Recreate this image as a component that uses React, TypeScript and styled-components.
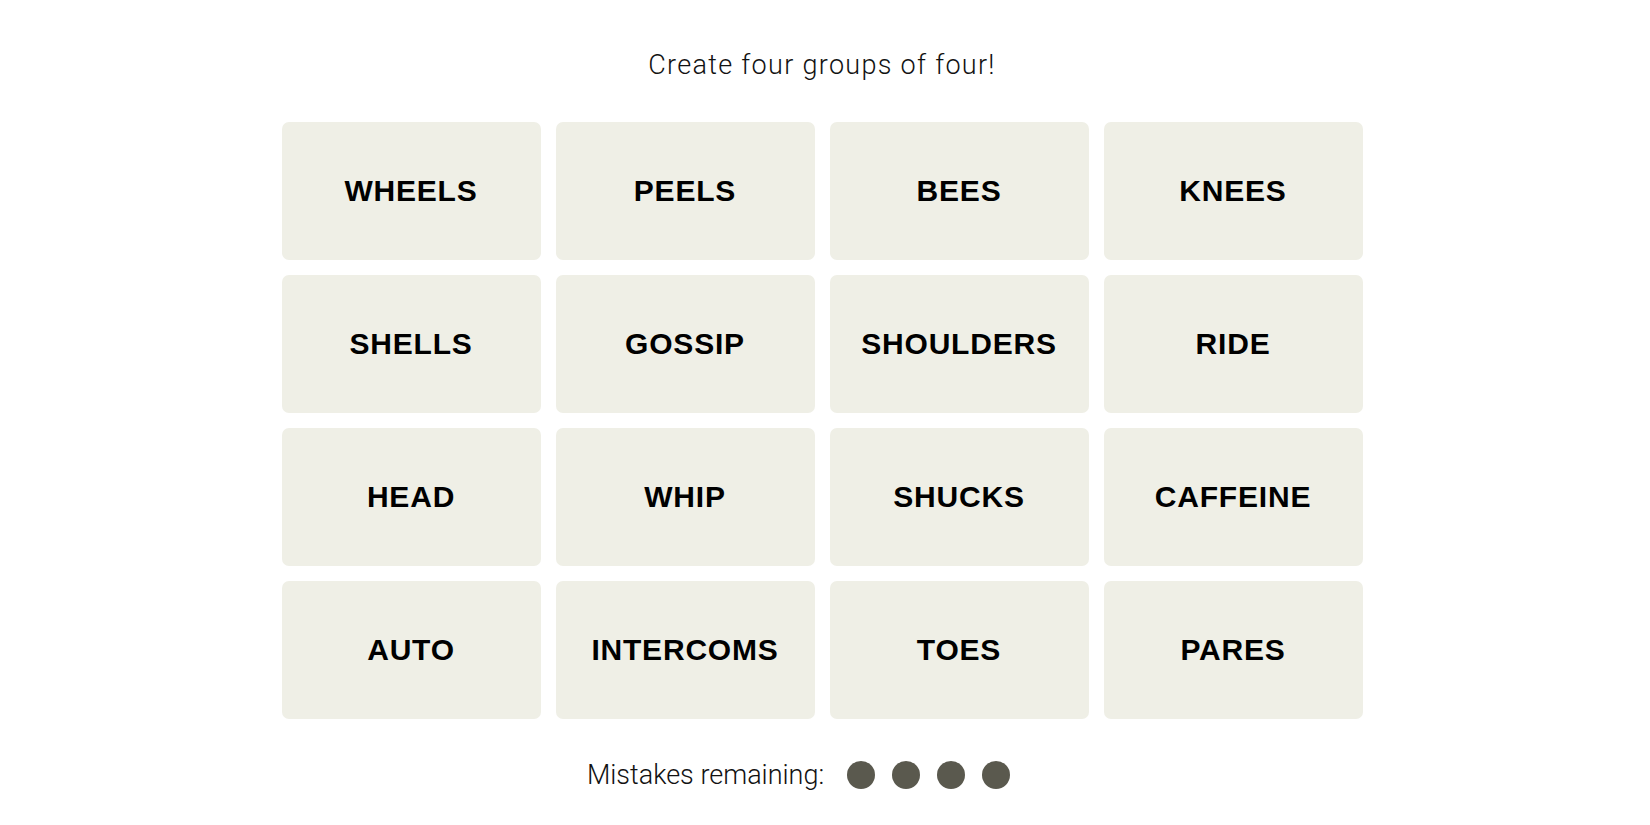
import React from "react";
import styled, { createGlobalStyle } from "styled-components";

const GlobalStyle = createGlobalStyle`
  html, body {
    margin: 0;
    padding: 0;
    background: #ffffff;
  }
  body {
    font-family: Roboto, "Liberation Sans", Arial, sans-serif;
    color: #121212;
  }
`;

const Page = styled.main`
  display: flex;
  flex-direction: column;
  align-items: center;
  width: 1644px;
  padding-top: 48px;
`;

const Title = styled.h2`
  margin: 0;
  font-size: 27px;
  font-weight: 300;
  line-height: 34px;
  letter-spacing: 1.3px;
`;

const Board = styled.div`
  display: grid;
  grid-template-columns: repeat(4, 259px);
  grid-auto-rows: 138px;
  gap: 15px;
  margin-top: 40px;
`;

const Card = styled.button`
  border: none;
  border-radius: 7px;
  background: #efefe6;
  color: #000;
  font-family: "Liberation Sans", Arial, sans-serif;
  font-size: 30px;
  font-weight: 700;
  letter-spacing: 0.8px;
  text-transform: uppercase;
  display: flex;
  align-items: center;
  justify-content: center;
  padding: 0;
  cursor: pointer;
`;

const Mistakes = styled.div`
  display: flex;
  align-items: center;
  gap: 17px;
  margin-top: 40px;
  margin-right: 47px;
`;

const MistakesLabel = styled.span`
  font-size: 27px;
  font-weight: 300;
  margin-right: 6px;
`;

const Dot = styled.span`
  width: 28px;
  height: 28px;
  border-radius: 50%;
  background: #5a594e;
`;

const words = [
  "Wheels", "Peels", "Bees", "Knees",
  "Shells", "Gossip", "Shoulders", "Ride",
  "Head", "Whip", "Shucks", "Caffeine",
  "Auto", "Intercoms", "Toes", "Pares",
];

export default function App() {
  return (
    <>
      <GlobalStyle />
      <Page>
        <Title>Create four groups of four!</Title>
        <Board>
          {words.map((w) => (
            <Card key={w}>{w}</Card>
          ))}
        </Board>
        <Mistakes>
          <MistakesLabel>Mistakes remaining:</MistakesLabel>
          {[0, 1, 2, 3].map((i) => (
            <Dot key={i} />
          ))}
        </Mistakes>
      </Page>
    </>
  );
}
